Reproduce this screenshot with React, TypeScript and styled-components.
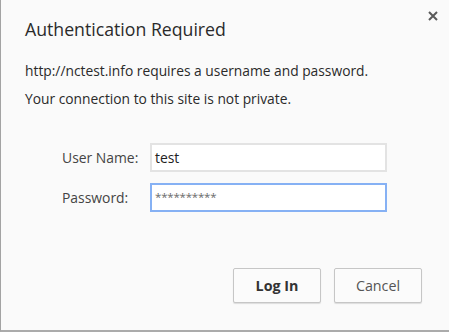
import React from "react";
import styled, { createGlobalStyle } from "styled-components";

const Global = createGlobalStyle`
  html, body { margin: 0; padding: 0; background: #ffffff; }
  * { box-sizing: border-box; }
`;

const Dialog = styled.div`
  position: relative;
  width: 449px;
  height: 332px;
  background: #fafafa;
  border-left: 1px solid #a3a3a3;
  border-bottom: 2px solid #ababab;
  font-family: "Open Sans", "Noto Sans", sans-serif;
  color: #333;
  display: flex;
  flex-direction: column;
  padding: 14px 0 0 24px;
`;

const Close = styled.button`
  position: absolute;
  top: 9px;
  right: 9px;
  width: 14px;
  height: 14px;
  padding: 0;
  border: none;
  background: transparent;
  display: flex;
  align-items: center;
  justify-content: center;
`;

const Title = styled.h1`
  margin: 0;
  font-size: 17.7px;
  font-weight: 400;
  line-height: 30px;
  color: #2a2a2a;
`;

const Message = styled.p<{ $top: number }>`
  margin: ${(p) => p.$top}px 0 0 0;
  font-size: 13.8px;
  line-height: 18px;
  color: #2a2a2a;
`;

const Form = styled.div`
  margin: 35px 0 0 37px;
  display: grid;
  grid-template-columns: 88px 237px;
  row-gap: 11px;
  align-items: center;
`;

const Label = styled.label`
  font-size: 13.9px;
  color: #444;
`;

const Field = styled.div<{ $focused?: boolean }>`
  height: 29px;
  border: 2px solid ${(p) => (p.$focused ? "#86b1f4" : "#e3e3e3")};
  background: #ffffff;
  padding: 0 3px;
  display: flex;
  align-items: center;
  font-size: 13.9px;
  color: #222;
`;

const Stars = styled.span`
  font-size: 11.5px;
  letter-spacing: -0.2px;
  color: #6a6a6a;
  margin-top: -3px;
`;

const Actions = styled.div`
  margin-top: auto;
  margin-bottom: 27px;
  margin-right: 27px;
  display: flex;
  justify-content: flex-end;
  gap: 13px;
`;

const Button = styled.button<{ $primary?: boolean }>`
  width: 88px;
  height: 35px;
  border: 1px solid #c6c6c6;
  border-radius: 2px;
  background: #fbfbfb;
  box-shadow: 0 1px 1px rgba(0, 0, 0, 0.12);
  font-family: "Open Sans", "Noto Sans", sans-serif;
  font-size: 14.3px;
  font-weight: ${(p) => (p.$primary ? 700 : 400)};
  color: ${(p) => (p.$primary ? "#333" : "#555")};
  padding: 0;
`;

export default function App() {
  return (
    <>
      <Global />
      <Dialog>
        <Close aria-label="Close">
          <svg width="10" height="10" viewBox="0 0 10 10">
            <path d="M1 1 L9 9 M9 1 L1 9" stroke="#5a5a5a" strokeWidth="2" />
          </svg>
        </Close>
        <Title>Authentication Required</Title>
        <Message $top={18}>http://nctest.info requires a username and password.</Message>
        <Message $top={10}>Your connection to this site is not private.</Message>
        <Form>
          <Label>User Name:</Label>
          <Field>test</Field>
          <Label>Password:</Label>
          <Field $focused>
            <Stars>**********</Stars>
          </Field>
        </Form>
        <Actions>
          <Button $primary>Log In</Button>
          <Button>Cancel</Button>
        </Actions>
      </Dialog>
    </>
  );
}
